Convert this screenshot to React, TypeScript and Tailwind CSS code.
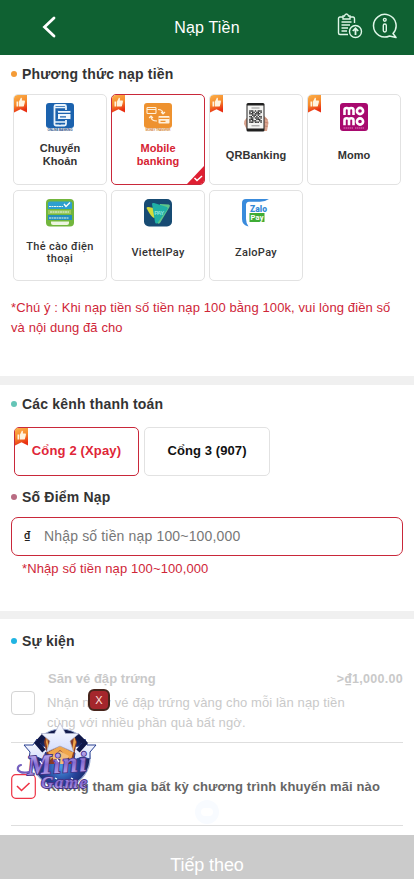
import type { ReactNode } from "react";

const SANS = "font-['Liberation_Sans',Arial,sans-serif]";
const ROBOTO = "font-[Roboto,sans-serif]";

function RecommendRibbon() {
  return (
    <svg className="absolute left-0 top-0" width="14" height="18" viewBox="0 0 14 18">
      <defs>
        <linearGradient id="ribbon" x1="0" y1="0" x2="0.3" y2="1">
          <stop offset="0" stopColor="#fbb04a" />
          <stop offset="0.55" stopColor="#f68a2c" />
          <stop offset="1" stopColor="#e92f12" />
        </linearGradient>
      </defs>
      <path d="M3 0H13V17.5L6.5 14.3L0 17.5V3Q0 0 3 0Z" fill="url(#ribbon)" />
      <path d="M2.5 6.5H4.3V11.5H2.5ZM5 6.5L7 2.5Q8.4 2.7 7.9 5.5H10.6Q11.2 6.2 10.8 7.5L9.9 11Q9.5 11.6 8.7 11.5H5Z" fill="#fff4df" />
    </svg>
  );
}

function TransferIcon() {
  return (
    <svg width="28" height="28" viewBox="0 0 28 28">
      <rect width="28" height="25" rx="3" fill="#1b62ae" />
      <rect x="8.5" y="2" width="11.5" height="20.5" rx="1.5" fill="#1b62ae" stroke="#e9f3fb" strokeWidth="1.8" />
      <path d="M8.5 4.5h11M8.5 19h11" stroke="#e9f3fb" strokeWidth="1.5" />
      <circle cx="14" cy="20.8" r="0.9" fill="#1b62ae" />
      <rect x="11.5" y="7.5" width="13.5" height="9" rx="1" fill="#eef6fc" stroke="#1b62ae" />
      <path d="M12 10.3h13M14 13.8h6" stroke="#1b62ae" strokeWidth="1.3" />
      <text x="1.5" y="27.5" fontSize="3" fontWeight="700" fill="#1b4c83" textLength="25">ONLINE BANKING</text>
    </svg>
  );
}

function MobileIcon() {
  return (
    <svg width="28" height="28" viewBox="0 0 28 28">
      <rect width="28" height="25" rx="3" fill="#ee922f" />
      <g fill="none" stroke="#fff0db" strokeWidth="1.1">
        <rect x="3" y="4.5" width="9" height="6" rx="0.8" />
        <path d="M3 6.5h9M14 6.5q5 0 5 4m-1.9-1.5l1.9 2 2-2M13 18q-6 0-6-4.5m-1.9 1.5L7 13l2 2" />
      </g>
      <rect x="14.5" y="13" width="11" height="7.5" rx="0.8" fill="#fff0db" />
      <path d="M14.5 15.4h11M16.5 18.3h5" stroke="#ee922f" strokeWidth="1.2" />
      <text x="1.5" y="27.5" fontSize="3" fontWeight="700" fill="#d4863a" textLength="25">MONEY TRANSFER</text>
    </svg>
  );
}

const QR_ROWS = ["111010111", "101101101", "111011110", "001110100", "110101011", "011011101", "111001110", "101110011", "111011101"];

function QrIcon() {
  return (
    <svg width="28" height="29" viewBox="0 0 28 29">
      <path d="M4.5 15Q2 17 2 21L5 27H8V16ZM22 13Q26 15 26.5 20L25 28H19V16Z" fill="#dba58f" />
      <path d="M22.5 15.5l3 1M22.5 19l3.5 1M22.5 23l3 .5" stroke="#b97865" strokeWidth="0.7" />
      <rect x="4.5" y="0" width="18" height="28.5" rx="1.5" fill="#202020" />
      <rect x="5.5" y="2.5" width="16" height="23" fill="#f5f5f3" />
      <path d="M9.5 5h8M9.5 22.8h8" stroke="#888" strokeWidth="0.9" />
      {QR_ROWS.flatMap((row, y) =>
        [...row].map((c, x) =>
          c === "1" ? <rect key={`${x}-${y}`} x={7.2 + x * 1.4} y={7.3 + y * 1.4} width="1.4" height="1.4" fill="#333" /> : null,
        ),
      )}
    </svg>
  );
}

function MomoIcon() {
  return (
    <svg width="28" height="28" viewBox="0 0 28 28">
      <rect width="28" height="28" rx="3" fill="#a8096e" />
      <g fill="none" stroke="#fff" strokeWidth="2.6">
        <path d="M4.5 12V7Q4.5 5 6.7 5T9 7V12M9 7Q9 5 11.2 5T13.5 7V12" />
        <circle cx="20" cy="8" r="3.1" />
        <path d="M4.5 22.3V17.3Q4.5 15.3 6.7 15.3T9 17.3V22.3M9 17.3Q9 15.3 11.2 15.3T13.5 17.3V22.3" />
        <circle cx="20" cy="18.5" r="3.1" />
      </g>
      <path d="M3.5 25h10M15 25h9" stroke="#e58ac6" strokeWidth="0.9" strokeDasharray="1.5 .5" />
    </svg>
  );
}

function CardIcon() {
  return (
    <svg width="28" height="28" viewBox="0 0 28 28">
      <rect width="28" height="27.5" rx="4" fill="#72b63d" />
      <path d="M2 4Q2 2.5 4 2.5H24Q26 2.5 26 4V10H2Z" fill="#2e9fd0" />
      <path d="M2 16h24v5H2z" fill="#238fbd" />
      <path d="M2 11h23v4H2z" fill="#98c75c" />
      <path d="M5 22.5h18v1.5q0 2-2 2H7q-2 0-2-2Z" fill="#eef5df" />
      <path d="M3 7.5h14M4 13h19M3 19h20M10 24h8" stroke="#e7f5ee" strokeWidth="1.2" strokeDasharray="2 .5" />
      <path d="M18 5l2 2.5 4-4" stroke="#fff" strokeWidth="1.4" fill="none" />
    </svg>
  );
}

function ViettelIcon() {
  return (
    <svg width="28" height="28" viewBox="0 0 28 28">
      <rect width="28" height="27.5" rx="5" fill="#174b73" />
      <path d="M2.5 9Q2.5 8 4.5 8L20 11 10 19Q7 18 2.5 9Z" fill="#d4dc3a" />
      <path d="M16 5L25 5.5Q26.5 6 25.5 8L16 24Q14 26 12.5 23Z" fill="#5fc68a" />
      <path d="M8 5Q8 3.5 10 4L23 8Q24.5 9 23 11L13.5 24Q11.5 25.5 11 23Z" fill="#20b0a5" />
      <text x="10.2" y="15.6" fontSize="6" fontWeight="700" fill="#8be3dc" textLength="10">PAY</text>
    </svg>
  );
}

function ZaloIcon() {
  return (
    <svg width="28" height="28" viewBox="0 0 28 28">
      <path d="M0 4Q0 0 4 0H27Q23 2.8 18 2.8H7Q4 3 4 6V20Q4 24 6.5 27.5Q0 26 0 20Z" fill="#398bdc" />
      <text x="8" y="13" fontFamily="Roboto" fontSize="8.5" fontWeight="900" fill="#3288d5" textLength="17">Zalo</text>
      <rect x="7.5" y="14" width="15" height="9" fill="#3fac35" />
      <text x="8.5" y="21" fontFamily="Roboto" fontSize="7.5" fontWeight="700" fill="#fff" textLength="13">Pay</text>
    </svg>
  );
}

type Method = { label: ReactNode; icon: ReactNode; hot?: boolean; active?: boolean; roboto?: boolean };

const METHODS: Method[] = [
  { label: <>Chuyển<br />Khoản</>, icon: <TransferIcon />, hot: true },
  { label: <>Mobile<br />banking</>, icon: <MobileIcon />, hot: true, active: true },
  { label: "QRBanking", icon: <QrIcon />, hot: true },
  { label: "Momo", icon: <MomoIcon />, hot: true },
  { label: <>Thẻ cào điện<br />thoại</>, icon: <CardIcon />, roboto: true },
  { label: "ViettelPay", icon: <ViettelIcon />, roboto: true },
  { label: "ZaloPay", icon: <ZaloIcon />, roboto: true },
];

function MethodCard({ label, icon, hot, active, roboto }: Method) {
  return (
    <div className={`relative flex h-[91px] flex-col items-center overflow-hidden rounded-[5px] border pt-2 ${active ? "border-[#c9283a] text-[#d62332]" : "border-[#e2e2e2] text-[#333]"}`}>
      {hot && <RecommendRibbon />}
      <div className="h-[29px]">{icon}</div>
      <div className={`flex h-[45px] items-center text-center text-[11px] ${roboto ? `${ROBOTO} pt-[4px] font-medium leading-[12px] tracking-[0.32px]` : `${SANS} pt-px font-bold leading-[13px] tracking-[0.05px]`}`}>
        <span>{label}</span>
      </div>
      {active && (
        <svg className="absolute bottom-0 right-0" width="17" height="18" viewBox="0 0 17 18">
          <path d="M17 0V18H0Z" fill="#df1f32" />
          <path d="M7.5 12l2.5 2.5 5-4.5" fill="none" stroke="#fff" strokeWidth="1.5" />
        </svg>
      )}
    </div>
  );
}

function SectionTitle({ dot, children }: { dot: string; children: ReactNode }) {
  return (
    <h2 className="flex h-5 items-center gap-[5px] pl-[11px] text-sm font-bold tracking-[0.19px] text-[#333]">
      <i className={`size-[6px] rounded-full ${dot}`} />
      {children}
    </h2>
  );
}

function MiniGameBadge() {
  return (
    <svg className="absolute left-[15px] top-[722px]" width="84" height="72" viewBox="0 0 84 72">
      <defs>
        <radialGradient id="orb" cx="0.5" cy="0.65" r="0.55">
          <stop offset="0" stopColor="#4a9be5" />
          <stop offset="0.5" stopColor="#25439a" />
          <stop offset="1" stopColor="#131b4c" />
        </radialGradient>
        <linearGradient id="chrome" x1="0" y1="0" x2="0" y2="1">
          <stop offset="0" stopColor="#ddd3ff" />
          <stop offset="0.5" stopColor="#8469cf" />
          <stop offset="1" stopColor="#c7b4f3" />
        </linearGradient>
        <linearGradient id="star" x1="0" y1="0" x2="0" y2="1">
          <stop offset="0" stopColor="#fff" />
          <stop offset="1" stopColor="#d3dcfb" />
        </linearGradient>
      </defs>
      <circle cx="46" cy="36" r="29" fill="url(#orb)" stroke="#9aabd2" strokeWidth="1.2" />
      <path d="M22 17L27 24 37 25 30 31 31 39 22 35 14 37 15 30 9 23 18 23ZM70 17L72 23 81 23 75 30 75 37 67 35 59 38 60 31 54 25 65 24Z" fill="url(#star)" stroke="#263e90" />
      <path d="M31 13L29 20 34 42H57L62 20 59 13Z" fill="#8a3b24" />
      <path d="M32 14L31 20 35 38 45 28 56 38 61 20 59 14 57 30 45 24 34 30Z" fill="#efa64c" />
      <path d="M29 13L22 21 29 29M62 13L70 21 63 29" fill="none" stroke="#101849" strokeWidth="4.5" />
      <path d="M45 1L50.5 11.5H64L55 19 58.5 30 45 24 31.5 30 35 19 26 11.5H39.5Z" fill="url(#star)" stroke="#aeb3cf" strokeWidth="0.7" strokeLinejoin="round" />
      <path d="M37 34L45 29 54 34 50 42H40Z" fill="#f3bd7a" />
      <g fontFamily="Liberation Serif, serif" fontWeight="700" fontStyle="italic" stroke="#453285" strokeWidth="1.8" paintOrder="stroke" fill="url(#chrome)">
        <text x="12" y="51" fontSize="28" textLength="60" transform="rotate(-4 42 46)">Mini</text>
        <text x="26" y="66" fontSize="17" textLength="46">Game</text>
      </g>
      <path d="M14 50Q6 52 3 48Q2 44 6 43" fill="none" stroke="#7560bf" strokeWidth="2.2" strokeLinecap="round" />
      <path d="M25 39l2 3M42 37l2 3M40 56l2 1M56 56l2 1" stroke="#fff" strokeWidth="1.3" />
    </svg>
  );
}

export default function App() {
  return (
    <div className={`relative h-[879px] w-full overflow-hidden bg-white ${SANS}`}>
      <header className="flex h-[55px] items-center bg-[#0f6132] text-white">
        <div className="flex w-[97px] justify-center pb-[2px]">
          <svg width="14" height="22" viewBox="0 0 14 22">
            <path d="M12 2L2.5 11 12 20" fill="none" stroke="currentColor" strokeWidth="2.8" strokeLinecap="round" />
          </svg>
        </div>
        <h1 className="flex-1 text-center text-base tracking-[0.2px]">Nạp Tiền</h1>
        <div className="flex w-[97px] items-center gap-[9px] pb-1 pl-[20px] text-[#dff6e8]">
          <svg width="26" height="26" viewBox="0 0 26 26" fill="none" stroke="currentColor" strokeWidth="1.4">
            <path d="M6 4H3Q1.5 4 1.5 5.5V20Q1.5 21.5 3 21.5H11M13 4h3Q17.5 4 17.5 6V10" />
            <path d="M6 6V3H7.5Q8 1 9.5 1T11.5 3H13V6Z" />
            <path d="M4.5 9H14.5M4.5 12H13M4.5 15H11M4.5 18H10" />
            <circle cx="18.5" cy="18.5" r="6" />
            <path d="M18.5 22V15.5M15.8 18L18.5 15.2 21.2 18" strokeWidth="1.8" />
          </svg>
          <svg width="26" height="26" viewBox="0 0 25 26" fill="none" stroke="currentColor" strokeWidth="1.5">
            <path d="M20.5 20.5A11.3 11.3 0 1 0 17 23L23.5 24.5Z" strokeLinejoin="round" />
            <circle cx="12.3" cy="6.8" r="1.4" strokeWidth="1.4" />
            <rect x="10.8" y="11" width="3" height="8" rx="1.4" strokeWidth="1.4" />
          </svg>
        </div>
      </header>

      <section className="h-[321px] pt-[9px]">
        <SectionTitle dot="bg-[#f49b37]">Phương thức nạp tiền</SectionTitle>
        <div className="mx-[13px] mt-[10px] grid grid-cols-4 gap-x-1 gap-y-[5px]">
          {METHODS.map((m, i) => <MethodCard key={i} {...m} />)}
        </div>
        <p className="mt-[17px] pl-[11px] text-[13px] leading-5 tracking-[0.1px] text-[#cf2638]">
          *Chú ý : Khi nạp tiền số tiền nạp 100 bằng 100k, vui lòng điền số<br />và nội dung đã cho
        </p>
      </section>

      <section className="border-t-[9px] border-[#f0f0f0] pt-[9px]">
        <SectionTitle dot="bg-[#65c5b7]">Các kênh thanh toán</SectionTitle>
        <div className="mt-[13px] flex gap-[5px] pl-[14px] text-[13px] font-bold">
          <div className="relative flex h-[49px] w-[125px] items-center justify-center rounded-[5px] border border-[#c9283a] pb-[2px] tracking-[0.15px] text-[#df2638]">
            <RecommendRibbon />
            Cổng 2 (Xpay)
          </div>
          <div className="flex h-[49px] w-[126px] items-center justify-center rounded-[5px] border border-[#e2e2e2] pb-[2px] tracking-[0.1px] text-[#111]">Cổng 3 (907)</div>
        </div>
        <div className="mt-[11px]">
          <SectionTitle dot="bg-[#b96c83]">Số Điểm Nạp</SectionTitle>
        </div>
        <div className="mx-[11px] mt-[10px] flex h-[39px] items-center rounded-[7px] border border-[#c9283a] pl-[12px]">
          <span className={`w-5 text-[11px] font-medium text-[#222] ${ROBOTO}`}>₫</span>
          <span className="text-[14px] tracking-[0.16px] text-[#777]">Nhập số tiền nạp 100~100,000</span>
        </div>
        <p className="h-[55px] pl-[22px] pt-[3px] text-[13px] leading-5 tracking-[0.11px] text-[#cf2638]">*Nhập số tiền nạp 100~100,000</p>
      </section>

      <section className="border-t-8 border-[#f0f0f0] pt-3">
        <SectionTitle dot="bg-[#20b4e2]">Sự kiện</SectionTitle>
        <div className="mx-[11px] mt-[18px] h-[74px] border-b border-[#dedede] text-[13px] text-[#c9c9c9]">
          <div className="flex h-5 justify-between pl-[37px] font-bold leading-5">
            <span className="tracking-[0.05px]">Săn vé đập trứng</span>
            <span className="text-[12.5px] leading-5 tracking-[0.3px]">&gt;<span className={ROBOTO}>₫</span>1,000.00</span>
          </div>
          <div className="flex">
            <i className="mt-[2px] size-6 rounded-[4px] border border-[#d4d4d4]" />
            <p className="pl-3 pt-[4px] leading-5 tracking-[0.12px]">
              Nhận ngay vé đập trứng vàng cho mỗi lần nạp tiền<br />cùng với nhiều phần quà bất ngờ.
            </p>
          </div>
        </div>
        <div className="mx-[11px] flex h-[83px] items-center border-b border-[#dedede] pt-[5px]">
          <svg width="25" height="25" viewBox="0 0 25 25" fill="none" stroke="#ee3345">
            <rect x="0.7" y="0.7" width="23.6" height="23.6" rx="4" strokeWidth="1.2" />
            <path d="M6 12l4.5 4.5L18.5 9" strokeWidth="1.6" />
          </svg>
          <span className="pl-[11px] text-[13px] font-bold tracking-[0.12px] text-[#666]">Không tham gia bất kỳ chương trình khuyến mãi nào</span>
        </div>
      </section>

      <button className="mt-[9px] block h-[44px] w-full bg-[#cbcbcb] pt-[15px] text-center text-lg leading-[30px] tracking-[-0.1px] text-white">Tiếp theo</button>

      <div className="absolute left-[195px] top-[800px] flex size-6 items-center justify-center rounded-full bg-[#f8fbff]">
        <i className="h-2 w-3 rounded-full bg-white" />
      </div>
      <MiniGameBadge />
      <div className="absolute left-[88px] top-[689px] flex size-[22px] items-center justify-center rounded-[6px] border-2 border-[#48251c] bg-[#a4262c] text-[11px] leading-none text-[#ffe0dc]">X</div>
    </div>
  );
}
